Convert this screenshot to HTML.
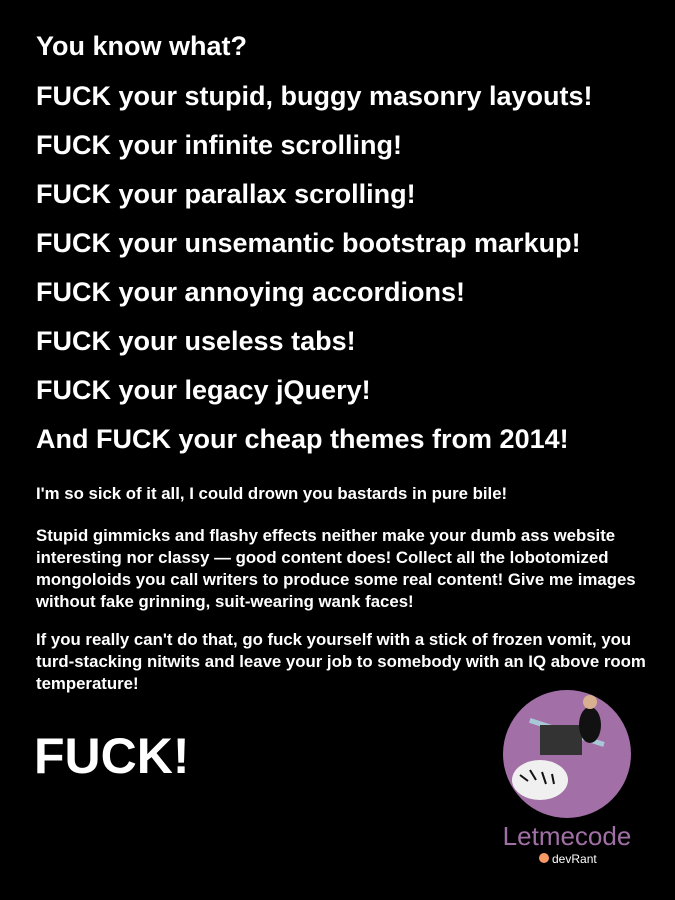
<!DOCTYPE html>
<html><head><style>
body{margin:0;background:#000;width:675px;height:900px;overflow:hidden;font-family:"Liberation Sans",Arial,sans-serif;color:#fff;font-weight:bold;position:relative}
h{position:absolute;left:36px;font-size:27px;white-space:nowrap}
p{position:absolute;left:36px;margin:0;font-size:16.8px;line-height:22px;width:622px}
</style></head><body>
<h style="top:31px">You know what?</h>
<h style="top:81px">FUCK your stupid, buggy masonry layouts!</h>
<h style="top:130px">FUCK your infinite scrolling!</h>
<h style="top:179px">FUCK your parallax scrolling!</h>
<h style="top:228px">FUCK your unsemantic bootstrap markup!</h>
<h style="top:277px">FUCK your annoying accordions!</h>
<h style="top:326px">FUCK your useless tabs!</h>
<h style="top:375px">FUCK your legacy jQuery!</h>
<h style="top:424px">And FUCK your cheap themes from 2014!</h>
<p style="top:483px">I'm so sick of it all, I could drown you bastards in pure bile!</p>
<p style="top:525px">Stupid gimmicks and flashy effects neither make your dumb ass website interesting nor classy — good content does! Collect all the lobotomized mongoloids you call writers to produce some real content! Give me images without fake grinning, suit-wearing wank faces!</p>
<p style="top:629px">If you really can't do that, go fuck yourself with a stick of frozen vomit, you turd-stacking nitwits and leave your job to somebody with an IQ above room temperature!</p>
<div style="position:absolute;left:34px;top:727px;font-size:50px">FUCK!</div>
<svg style="position:absolute;left:490px;top:680px" width="160" height="200">
<circle cx="77" cy="74" r="64" fill="#a26fa6"/>
<rect x="38" y="50" width="78" height="5" fill="#a8c8d8" transform="rotate(18 77 52)"/>
<rect x="50" y="45" width="42" height="30" fill="#333"/>
<ellipse cx="100" cy="45" rx="11" ry="18" fill="#111"/>
<circle cx="100" cy="22" r="7" fill="#d8b090"/>
<ellipse cx="50" cy="100" rx="28" ry="20" fill="#f0f0f0"/>
<path d="M30 95l8 6M40 90l6 10M52 92l4 12M62 94l2 10" stroke="#111" stroke-width="2"/>
<text x="77" y="165" text-anchor="middle" font-family="Liberation Sans,sans-serif" font-size="26" font-weight="normal" fill="#a06fa5">Letmecode</text>
<circle cx="54" cy="178" r="5" fill="#f99a66"/>
<text x="62" y="183" font-family="Liberation Sans,sans-serif" font-size="12" font-weight="normal" fill="#fff">devRant</text>
</svg>
</body></html>
